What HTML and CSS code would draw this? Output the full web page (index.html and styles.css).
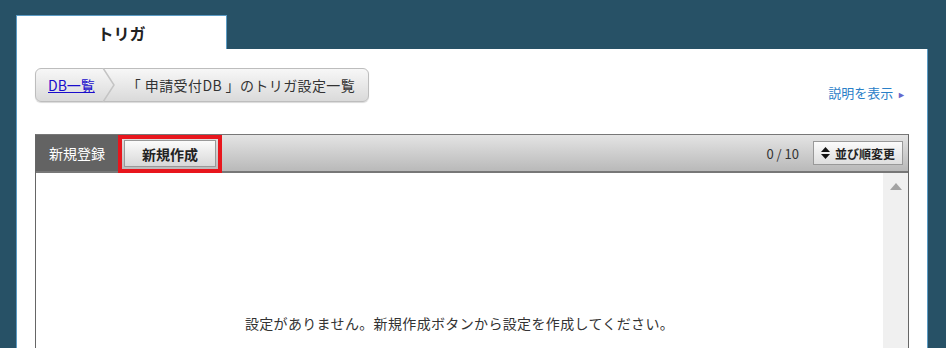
FILE: index.html
```html
<!DOCTYPE html>
<html lang="ja">
<head>
    <meta charset="UTF-8">
    <title>トリガ</title>
    <link rel="stylesheet" href="styles.css">
</head>
<body>
    <div class="page">
        <div class="tab">トリガ</div>
        <div class="panel">
            <div class="head-row">
                <div class="crumbs">
                    <a href="#" class="crumb-link">DB一覧</a>
                    <svg class="crumb-sep" width="14" height="34" viewBox="0 0 14 34">
                        <polyline points="1,0 12,17 1,34" fill="none" stroke="#c4c4c4" stroke-width="1.5"/>
                    </svg>
                    <span class="crumb-current">「 申請受付DB 」のトリガ設定一覧</span>
                </div>
                <a href="#" class="help-link">説明を表示 <span class="help-arrow">&#9658;</span></a>
            </div>

            <div class="list-box">
                <div class="toolbar">
                    <div class="new-label">新規登録</div>
                    <div class="mark">
                        <button class="btn-new">新規作成</button>
                    </div>
                    <div class="toolbar-right">
                        <span class="count">0 / 10</span>
                        <button class="btn-sort">
                            <svg width="9" height="12" viewBox="0 0 9 12">
                                <polygon points="4.5,0 9,5 0,5" fill="#111"/>
                                <polygon points="0,7 9,7 4.5,12" fill="#111"/>
                            </svg>
                            並び順変更
                        </button>
                    </div>
                </div>
                <div class="list-body">
                    <div class="empty">設定がありません。新規作成ボタンから設定を作成してください。</div>
                    <div class="scrollbar">
                        <svg width="12" height="7" viewBox="0 0 12 7"><polygon points="6,0 12,7 0,7" fill="#a3a3a3"/></svg>
                    </div>
                </div>
            </div>
        </div>
    </div>
</body>
</html>
```

FILE: styles.css
```css
body {
    margin: 0;
    background-color: #275166;
    font-family: "Noto Sans CJK JP", "Noto Sans", sans-serif;
    color: #333;
    font-size: 14px;
}
.page {
    padding: 15px 0 0 16px;
    width: 912px;
}
.tab {
    width: 209px;
    height: 34px;
    line-height: 34px;
    background-color: #fff;
    border: 1px solid #5b9bc4;
    border-bottom: none;
    text-align: center;
    font-weight: bold;
    font-size: 16px;
    color: #222;
    margin-bottom: -1px;
}
.panel {
    background-color: #fff;
    border-left: 1px solid #5b9bc4;
    border-right: 1px solid #5b9bc4;
    padding: 19px 18px 0 18px;
    height: 280px;
}
.head-row {
    display: flex;
    justify-content: space-between;
    align-items: flex-end;
}
.crumbs {
    display: flex;
    align-items: center;
    height: 32px;
    padding-right: 13px;
    border: 1px solid #bdbdbd;
    border-radius: 6px;
    background: linear-gradient(#f7f7f7, #dadada);
    box-shadow: 0 1px 1px rgba(0, 0, 0, 0.15);
}
.crumb-link {
    color: #1a0dcc;
    text-decoration: underline;
    margin-left: 12px;
    margin-right: 7px;
}
.crumb-sep {
    display: block;
}
.crumb-current {
    margin-left: 11px;
    color: #333;
    white-space: nowrap;
    letter-spacing: 0.4px;
}
.help-link {
    color: #2a80c8;
    text-decoration: none;
    font-size: 13px;
    margin-right: 3px;
}
.help-arrow {
    color: #6666cc;
    font-size: 9px;
    margin-left: 1px;
}
.list-box {
    margin-top: 32px;
    border: 1px solid #666;
    border-top-color: #777;
}
.toolbar {
    display: flex;
    align-items: center;
    height: 36px;
    background: linear-gradient(#e4e4e4, #b9b9b9);
    border-bottom: 2px solid #777;
}
.new-label {
    background-color: #636363;
    color: #fff;
    width: 82px;
    height: 36px;
    line-height: 36px;
    text-align: center;
}
.mark {
    border: 4px solid #e8161d;
    height: 30px;
    width: 96px;
    margin-top: 1px;
    display: flex;
    align-items: center;
    justify-content: center;
}
.btn-new {
    width: 92px;
    height: 27px;
    font-family: inherit;
    font-size: 14px;
    font-weight: bold;
    color: #222;
    border: 1px solid #999;
    background: linear-gradient(#fbfbfb, #d8d8d8);
    padding: 0;
}
.toolbar-right {
    margin-left: auto;
    display: flex;
    align-items: center;
    margin-right: 5px;
}
.count {
    margin-right: 14px;
    color: #333;
    font-size: 13px;
}
.btn-sort {
    display: flex;
    align-items: center;
    gap: 5px;
    height: 24px;
    width: 90px;
    justify-content: center;
    font-family: inherit;
    font-size: 12px;
    font-weight: bold;
    color: #222;
    border: 1px solid #999;
    background: linear-gradient(#fbfbfb, #dedede);
    padding: 0;
}
.list-body {
    display: flex;
    height: 200px;
}
.empty {
    flex: 1;
    text-align: center;
    padding-top: 140px;
    color: #333;
    letter-spacing: 0.35px;
}
.scrollbar {
    width: 25px;
    background-color: #f0f0f0;
    display: flex;
    justify-content: center;
    padding-top: 10px;
    box-sizing: border-box;
}
```
